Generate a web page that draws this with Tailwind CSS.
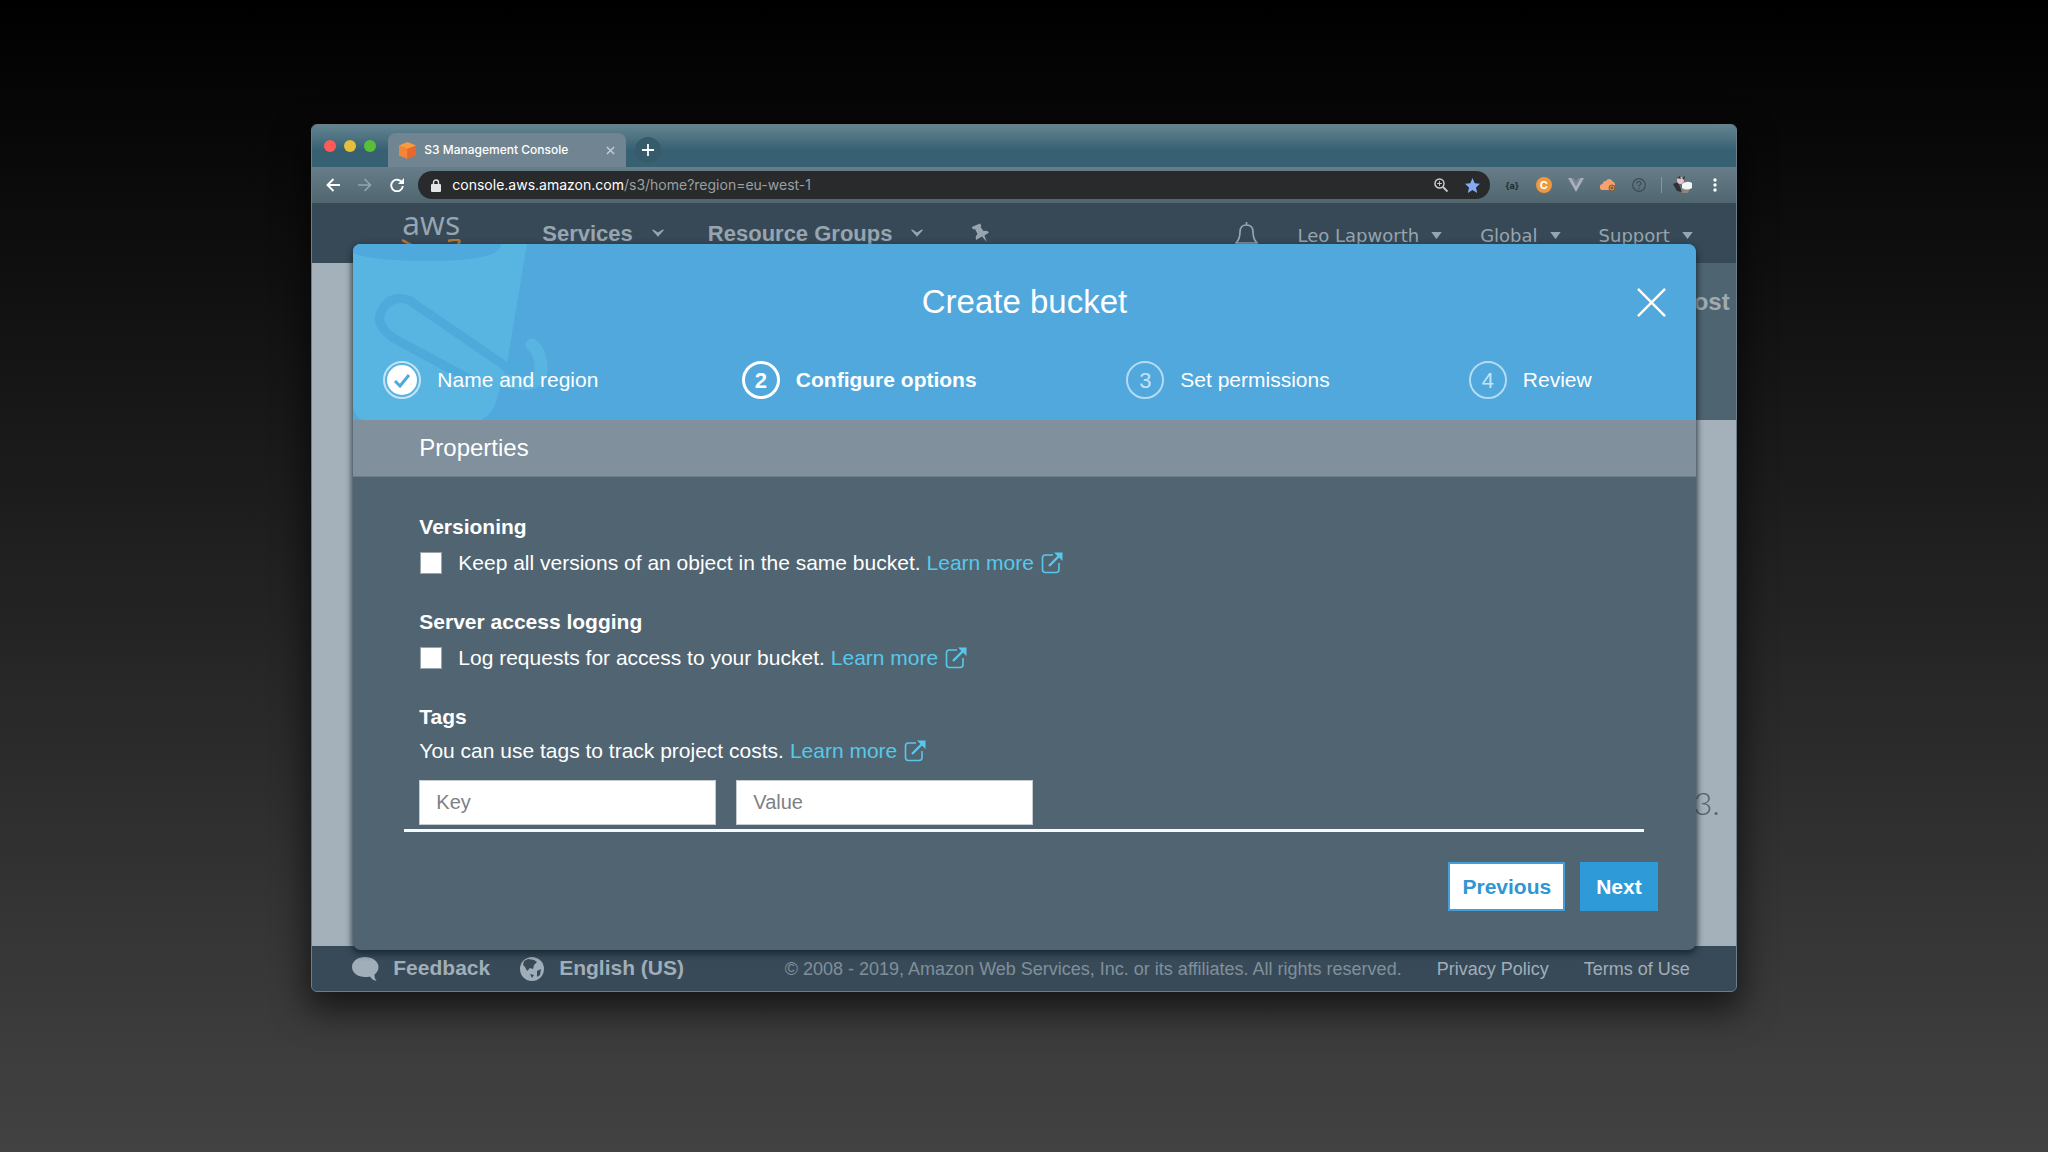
<!doctype html>
<html lang="en">
<head>
  <meta charset="UTF-8">
  <meta name="viewport" content="width=device-width, initial-scale=1.0">
  <script src="https://cdn.jsdelivr.net/npm/@tailwindcss/browser@4"></script>
  <title>S3 Management Console</title>
</head>
<body class="min-h-screen bg-linear-to-b/srgb from-black to-[#434243] pt-31 pb-40 font-['Liberation_Sans',sans-serif]">
  <svg class="hidden">
    <symbol id="external" viewBox="0 0 22 22">
      <path d="M12 3H4.500Q1.500 3 1.500 6V17.500Q1.500 20.500 4.500 20.500H15Q18 20.500 18 17.500V11" fill="none" stroke="currentColor" stroke-width="1.600"/>
      <path d="M8 14 18 4" stroke="currentColor" stroke-width="2.400"/>
      <path d="M13 0.500H21.500V9Z" fill="currentColor"/>
    </symbol>
    <symbol id="caret" viewBox="0 0 12 8"><path d="M0 0H12L6 8Z" fill="currentColor"/></symbol>
    <symbol id="chevron" viewBox="0 0 14 9"><path d="M0 1Q1 0 2.500 1L7 4 11.500 1Q13 0 14 1L7 9Z" fill="currentColor"/></symbol>
  </svg>

  <div class="mx-auto w-[69.6%] rounded-md border border-[#6b7e89] bg-[#3b6373] shadow-[0_14px_34px_4px_rgba(0,0,0,0.6)] overflow-hidden">
    <!-- tab strip -->
    <div class="flex h-[42px] items-end bg-linear-to-b from-[#648491] to-[#376172] to-60%">
      <div class="flex h-full w-[76px] shrink-0 items-center gap-2 pl-3">
        <span class="size-3 rounded-full bg-[#fc5b57]"></span>
        <span class="size-3 rounded-full bg-[#e5bf3c]"></span>
        <span class="size-3 rounded-full bg-[#57c038]"></span>
      </div>
      <div class="flex h-[34px] w-[238px] shrink-0 items-center rounded-t-lg bg-[#708591] pl-[11px] pr-[11px]">
        <svg class="size-[17px]" viewBox="0 0 17 17">
          <path d="M8.500 0 17 3.500 8.500 7 0 3.500Z" fill="#ff9b3d"/>
          <path d="M0 3.500 8.500 7V17L0 13.500Z" fill="#f58536"/>
          <path d="M17 3.500 8.500 7V17L17 13.500Z" fill="#e8672b"/>
        </svg>
        <span class="ml-2 text-xs font-medium text-white font-['Inter',sans-serif] whitespace-nowrap">S3 Management Console</span>
        <button class="ml-auto" type="button" aria-label="Close tab">
          <svg class="size-[9px]" viewBox="0 0 10 10"><path d="M1 1 9 9M9 1 1 9" stroke="#c4ced4" stroke-width="1.500"/></svg>
        </button>
      </div>
      <button class="mb-1 ml-[9px] flex size-[26px] items-center justify-center rounded-full bg-[#365c6b]" type="button" aria-label="New tab">
        <svg class="size-3" viewBox="0 0 12 12"><path d="M6 0V12M0 6H12" stroke="#fff" stroke-width="1.800"/></svg>
      </button>
    </div>

    <!-- toolbar -->
    <div class="flex h-[36px] items-center bg-linear-to-b from-[#677d89] to-[#50666f] pl-[14px] pr-[19px]">
      <div class="flex items-center gap-[18px]">
        <button type="button" aria-label="Back"><svg class="size-[14px]" viewBox="0 0 14 14"><path d="M14 7H2M7.500 1 1.500 7 7.500 13" fill="none" stroke="#fff" stroke-width="1.900"/></svg></button>
        <button type="button" aria-label="Forward"><svg class="size-[14px]" viewBox="0 0 14 14"><path d="M0 7H12M6.500 1 12.500 7 6.500 13" fill="none" stroke="#94a5ae" stroke-width="1.600"/></svg></button>
        <button type="button" aria-label="Reload"><svg class="size-[14px]" viewBox="0 0 14 14"><path d="M12 4.500A5.800 5.800 0 1 0 12.800 8" fill="none" stroke="#fff" stroke-width="1.900"/><path d="M14 0V6H8Z" fill="#fff"/></svg></button>
      </div>
      <div class="ml-[14px] flex h-7 grow items-center rounded-full bg-[#282a2c] pl-[13px] pr-[10px] font-['Inter',sans-serif]">
        <svg class="h-[13px] w-[10px]" viewBox="0 0 10 13"><path d="M2.500 5V3.500a2.500 2.500 0 0 1 5 0V5" fill="none" stroke="#e3e5e6" stroke-width="1.400"/><rect y="5" width="10" height="8" rx="1" fill="#e3e5e6"/></svg>
        <a href="#" class="ml-[11px] text-sm text-[#9aa0a4]"><span class="text-white">console.aws.amazon.com</span>/s3/home?region=eu-west-1</a>
        <svg class="ml-auto size-[14px]" viewBox="0 0 14 14" fill="none" stroke="#c9cccd"><circle cx="5.500" cy="5.500" r="4.500" stroke-width="1.500"/><path d="M9 9 13.500 13.500" stroke-width="1.900"/><path d="M5.500 3.200V7.800M3.200 5.500H7.800"/></svg>
        <svg class="ml-[17px] size-[15px]" viewBox="0 0 24 24"><path d="M12 0 15.600 8.300 24 9 17.600 15 19.500 24 12 19.200 4.500 24 6.400 15 0 9 8.400 8.300Z" fill="#83acf5"/></svg>
      </div>
      <div class="ml-[15px] flex items-center gap-4">
        <span class="w-[15px] text-center text-[9px] leading-none font-bold text-[#1c2b35] font-['Inter',sans-serif]">{a}</span>
        <span class="flex size-4 items-center justify-center rounded-full bg-[#ee9a3c] text-[11px] leading-none font-bold text-white font-['Inter',sans-serif]">C</span>
        <svg class="h-[14px] w-4" viewBox="0 0 15 13"><path d="M0 0H5L7.500 4.500 10 0H15L7.500 13Z" fill="#a9b0bd"/><path d="M3 0H5.500L7.500 3.500 9.500 0H12L7.500 8Z" fill="#7d8794"/></svg>
        <svg class="h-[14px] w-4" viewBox="0 0 16 14"><path d="M3 12a3 3 0 0 1-.500-6A3.500 3.500 0 0 1 6 3 3.500 3.500 0 0 1 12.500 3.500 3 3 0 0 1 14.500 8L12 12Z" fill="#f8a16c"/><circle cx="12" cy="10" r="3" fill="#c98948" stroke="#7c5b3a"/><circle cx="12" cy="10" r="1" fill="#5d4a35"/></svg>
        <svg class="size-[14px]" viewBox="0 0 14 14" fill="none" stroke="#3c4c56"><circle cx="7" cy="7" r="6.300" stroke-width="1.200"/><path d="M5 5.500Q5 3.500 7 3.500T9 5.500Q9 6.500 7 7.800V8.500M7 9.800V11" stroke-width="1.200"/></svg>
        <span class="-mx-px h-4 w-px bg-[#8697a1]"></span>
        <svg class="-ml-1 h-[18px] w-[20px]" viewBox="0 0 20 18"><path d="M0 8 5 6 9 16 4 15Z" fill="#2c3237"/><path d="M8 12H17L15 17H9Z" fill="#8c8478"/><circle cx="7.500" cy="4.500" r="3.500" fill="#ecc0c8"/><path d="M4 2 7 0 8 3ZM9 2 12 0 11 4Z" fill="#30363b"/><path d="M9 8Q14 4 19 7V12Q14 15 9 12Z" fill="#f3f6f7"/></svg>
      </div>
      <button class="ml-5" type="button" aria-label="Menu">
        <svg class="h-[14px] w-1" viewBox="0 0 4 14" fill="#fff"><circle cx="2" cy="2" r="1.700"/><circle cx="2" cy="7" r="1.700"/><circle cx="2" cy="12" r="1.700"/></svg>
      </button>
    </div>

    <!-- page and dialog share one grid cell -->
    <div class="grid">
      <div class="col-start-1 row-start-1 flex flex-col">
        <header class="flex h-[60px] bg-[#374956] text-[#96a5b0]">
          <div class="pl-[90px]">
            <span class="block text-[32px] leading-10 font-['Open_Sans',sans-serif]">aws</span>
            <svg class="-mt-1 h-4 w-[60px]" viewBox="0 0 60 16" fill="none" stroke="#b97a3c" stroke-width="2.500"><path d="M0 1Q28 18 54 6M46 2Q60 -1 57 4T53 11"/></svg>
          </div>
          <nav class="flex h-[60px] items-center pl-20 text-[22px] font-bold">
            <a href="#">Services</a>
            <svg class="ml-[19px] h-2 w-3"><use href="#chevron"/></svg>
            <a href="#" class="ml-[44px]">Resource Groups</a>
            <svg class="ml-[19px] h-2 w-3"><use href="#chevron"/></svg>
            <svg class="ml-12 h-5 w-[19px]" viewBox="0 0 19 20" fill="currentColor"><path d="M0.800 4 9 0.500 10.500 3 9.500 4 12.500 8Q17 7 18 9.500L13.500 12.500 15.800 19 11 13.500 5 17Q4 13 6.500 11L4 6 2 6.500Z"/></svg>
          </nav>
          <nav class="ml-auto flex h-[64px] items-center pr-[43px] text-[18px] font-['DejaVu_Sans',sans-serif]">
            <svg class="mr-10 h-[26px] w-[23px]" viewBox="0 0 23 26" fill="none" stroke="currentColor" stroke-width="1.700"><path d="M11.500 0V2.500M1 21Q5 17 5 10 5 3 11.500 3T18 10Q18 17 22 21ZM8.500 22Q8.500 25 11.500 25T14.500 22"/></svg>
            <a href="#">Leo Lapworth</a>
            <svg class="ml-3 h-[7px] w-[11px]"><use href="#caret"/></svg>
            <a href="#" class="ml-[38px]">Global</a>
            <svg class="ml-3 h-[7px] w-[11px]"><use href="#caret"/></svg>
            <a href="#" class="ml-[38px]">Support</a>
            <svg class="ml-3 h-[7px] w-[11px]"><use href="#caret"/></svg>
          </nav>
        </header>
        <div class="flex grow bg-[#a4b1ba]">
          <div class="ml-auto flex w-24 flex-col text-right">
            <div class="h-[157px] bg-[#4e6470] pt-[23px] pr-1.5 text-2xl font-bold text-[#9fabb3]">ost</div>
            <div class="mt-auto mb-[123px] pr-4 text-[32px] leading-10 font-light text-[#55636e] font-['Lato',sans-serif]">3.</div>
          </div>
        </div>
        <footer class="flex h-[45px] items-center bg-[#384a58] pl-10 pr-[46px] text-lg text-[#a0aeb9]">
          <svg class="h-6 w-[27px]" viewBox="0 0 27 24" fill="currentColor"><path d="M13 0C6 0 0 4 0 10s6 10 13 10c2 0 4 0 5-.500Q20 23 24.500 24 22 21 22.500 17.500C25 16 26.500 13 26.500 10 26.500 4 20 0 13 0Z"/></svg>
          <a href="#" class="ml-3.5 text-[21px] font-bold">Feedback</a>
          <svg class="ml-[30px] size-6" viewBox="0 0 24 24"><circle cx="12" cy="12" r="12" fill="#a0aeb9"/><path d="M4 4 8 2 14 3 17 5 14 8 13 12 10 11 7 14 5 10 3 8ZM17 14 21 12 20 18 17 20ZM10 17 14 18 12 21Z" fill="#384a58"/></svg>
          <a href="#" class="ml-[15px] text-[21px] font-bold">English (US)</a>
          <p class="ml-auto text-[#80909b]">© 2008 - 2019, Amazon Web Services, Inc. or its affiliates. All rights reserved.</p>
          <a href="#" class="ml-[35px]">Privacy Policy</a>
          <a href="#" class="ml-[35px]">Terms of Use</a>
        </footer>
      </div>

      <section class="relative col-start-1 row-start-1 mr-10 ml-[41px] mt-[41px] mb-[41px] overflow-hidden rounded-lg bg-[#516471] text-white shadow-[0_3px_6px_1px_rgba(20,35,46,0.85)]" role="dialog" aria-labelledby="dialog-title">
        <header class="relative h-44 bg-[#50a8dd] pt-10">
          <svg class="absolute top-0 left-0 h-44 w-[200px]" viewBox="0 0 200 176" fill="none">
            <path d="M0 0H174L155 114Q146 150 144 154 142 168 128 176H9Q2 172 0 164Z" fill="#58b4e1"/>
            <path d="M0 0H148Q148 17 75 17 20 17 0 9Z" fill="#4fa9dc"/>
            <path d="M145 134Q190 150 188 120 186 106 179 101" stroke="#58b4e1" stroke-width="13" stroke-linecap="round"/>
            <path d="M118 136 42 95Q22 82 28 68 36 50 56 56L148 119Q162 132 172 118" stroke="#4faadc" stroke-width="9"/>
          </svg>
          <h1 id="dialog-title" class="relative text-center text-[33px] leading-9">Create bucket</h1>
          <button class="absolute top-11 right-[30px]" type="button" aria-label="Close">
            <svg class="size-[29px]" viewBox="0 0 30 30"><path d="M1 1 29 29M29 1 1 29" stroke="#fff" stroke-width="2.500"/></svg>
          </button>
          <ol class="relative mt-[41px] grid grid-cols-[359fr_385fr_343fr_122fr] pl-[30px] pr-[104px] text-[21px] whitespace-nowrap">
            <li class="flex items-center gap-4">
              <svg class="size-[38px]" viewBox="0 0 38 38"><circle cx="19" cy="19" r="18" fill="none" stroke="#c5e3f5" stroke-width="2"/><circle cx="19" cy="19" r="15" fill="#fff"/><path d="M12 20 17 25 26 14" fill="none" stroke="#50a8dd" stroke-width="3"/></svg>
              Name and region
            </li>
            <li class="flex items-center gap-4 font-bold">
              <span class="flex size-[38px] items-center justify-center rounded-full border-3 border-white text-[22px]">2</span>
              Configure options
            </li>
            <li class="flex items-center gap-4">
              <span class="flex size-[38px] items-center justify-center rounded-full border-2 border-[#b5dbf3] text-[22px] text-[#c5e3f5]">3</span>
              Set permissions
            </li>
            <li class="flex items-center gap-4">
              <span class="flex size-[38px] items-center justify-center rounded-full border-2 border-[#b5dbf3] text-[22px] text-[#c5e3f5]">4</span>
              Review
            </li>
          </ol>
        </header>
        <h2 class="border-b border-[#6c7e8a] bg-[#80909c] pl-[66px] text-2xl leading-14">Properties</h2>
        <form class="pt-9 pr-[38px] pb-[39px] text-[21px] leading-7">
          <div class="flex flex-col gap-[31px] pl-[66px]">
            <div>
              <h3 class="font-bold">Versioning</h3>
              <div class="mt-2 flex items-center">
                <input id="versioning" type="checkbox" class="ml-px size-[22px] appearance-none border border-[#9aa4ab] bg-white">
                <label for="versioning" class="ml-4">Keep all versions of an object in the same bucket.</label>
                <a href="#" class="ml-1.5 flex items-center gap-[7px] text-[#58c8ea]">Learn more <svg class="size-[22px]"><use href="#external"/></svg></a>
              </div>
            </div>
            <div>
              <h3 class="font-bold">Server access logging</h3>
              <div class="mt-2 flex items-center">
                <input id="logging" type="checkbox" class="ml-px size-[22px] appearance-none border border-[#9aa4ab] bg-white">
                <label for="logging" class="ml-4">Log requests for access to your bucket.</label>
                <a href="#" class="ml-1.5 flex items-center gap-[7px] text-[#58c8ea]">Learn more <svg class="size-[22px]"><use href="#external"/></svg></a>
              </div>
            </div>
            <div>
              <h3 class="font-bold">Tags</h3>
              <p class="mt-1.5 flex items-center">You can use tags to track project costs. <a href="#" class="ml-1.5 flex items-center gap-[7px] text-[#58c8ea]">Learn more <svg class="size-[22px]"><use href="#external"/></svg></a></p>
              <div class="mt-[15px] flex gap-5">
                <input type="text" placeholder="Key" aria-label="Key" class="h-[45px] w-[297px] border border-[#c5ccd1] bg-white px-4 text-xl font-light text-gray-700 placeholder:text-[#7d8185]">
                <input type="text" placeholder="Value" aria-label="Value" class="h-[45px] w-[297px] border border-[#c5ccd1] bg-white px-4 text-xl font-light text-gray-700 placeholder:text-[#7d8185]">
              </div>
            </div>
          </div>
          <hr class="mt-1 mr-3.5 ml-[51px] border-t-3 border-[#f6f9fb]">
          <div class="mt-[30px] flex justify-end gap-[15px] text-[21px] font-bold">
            <button type="button" class="h-[49px] border-2 border-[#419fd9] bg-white px-3 text-[#2f96d3]">Previous</button>
            <button type="button" class="h-[49px] bg-[#2f9ad8] px-4 text-white">Next</button>
          </div>
        </form>
      </section>
    </div>
  </div>
</body>
</html>
